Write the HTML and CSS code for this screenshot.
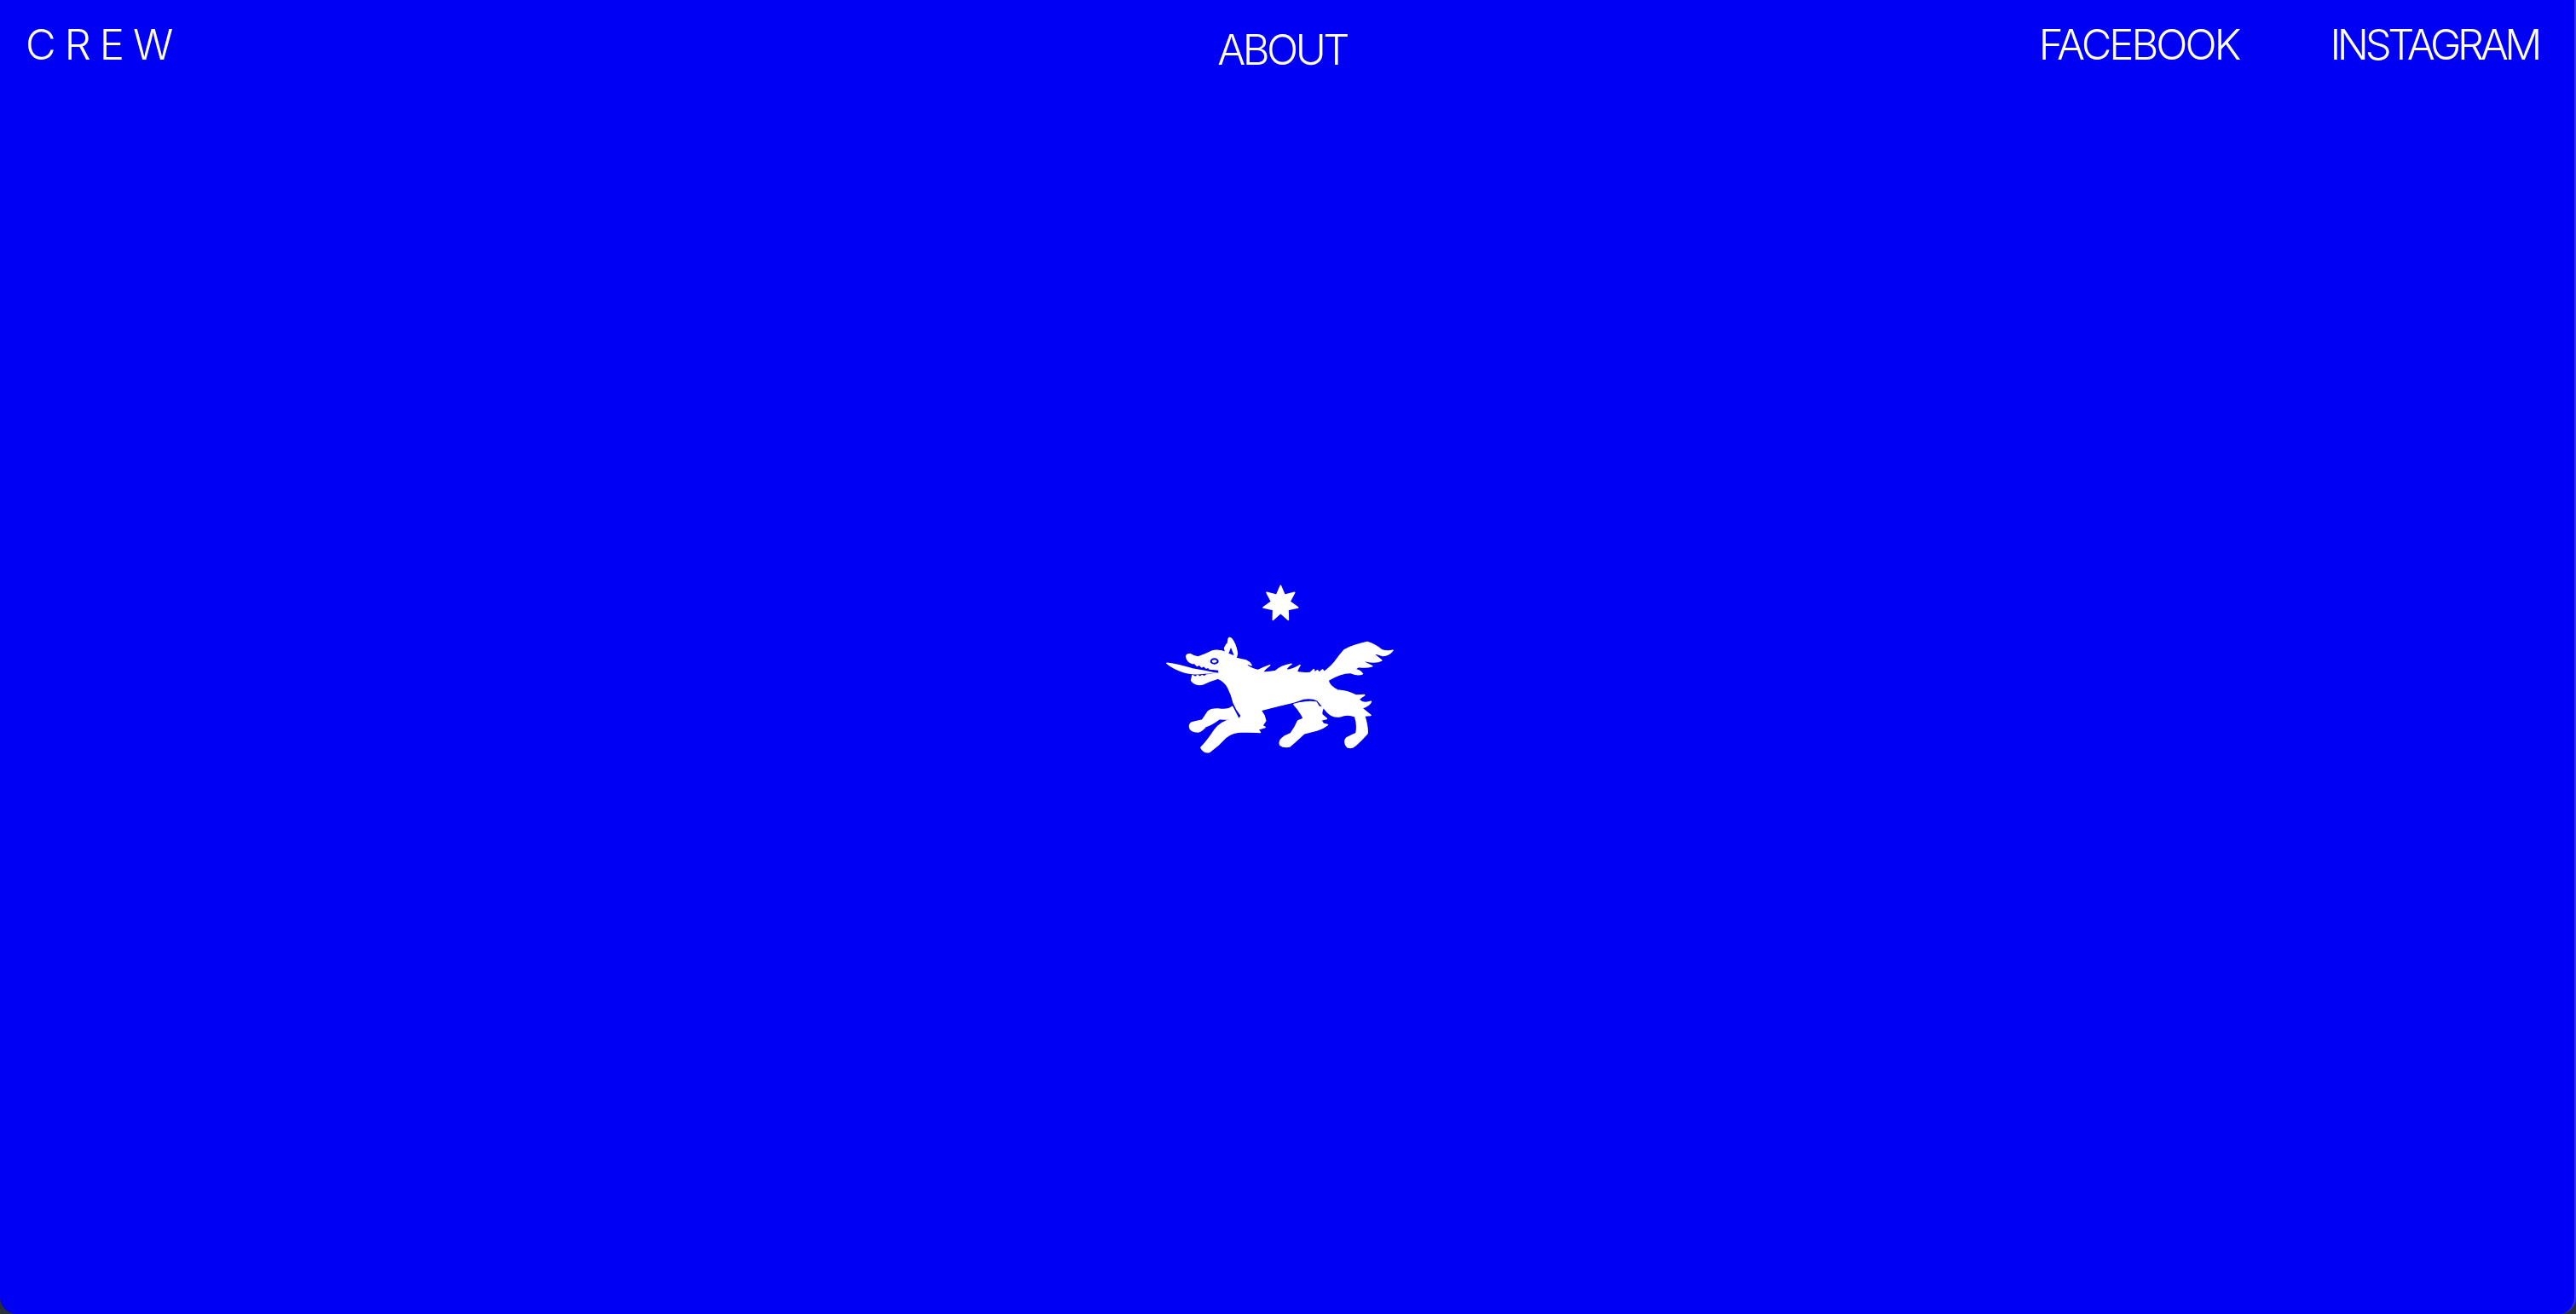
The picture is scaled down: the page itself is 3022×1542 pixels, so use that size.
FILE: index.html
```html
<!DOCTYPE html>
<html lang="en">
<head>
<meta charset="utf-8">
<title>CREW</title>
<link rel="stylesheet" href="styles.css">
</head>
<body>
<div class="page">
  <header class="topbar">
    <a class="brand" href="#">CREW</a>
    <a class="link about" href="#">ABOUT</a>
    <nav class="social">
      <a class="link" href="#">FACEBOOK</a>
      <a class="link insta" href="#">INSTAGRAM</a>
    </nav>
  </header>
  <main class="stage">
    <svg class="emblem" viewBox="0 0 1026 690" width="342" height="230" aria-label="Wolf and star">
      <polygon class="ink" points="490,52 504,85 539,76 522,108 551,129 516,136 517,172 490,148 463,172 464,136 429,129 458,108 441,76 476,85"/>
      <path class="ink" d="M158,300 Q162,292 172,293 Q185,302 200,303 Q225,295 250,282 Q270,276 297,287 L293,272 L300,258 L303,262 L307,238 Q310,232 318,240 Q332,258 337,290 Q336,300 332,307 Q350,312 368,315 Q380,320 387,332 Q375,326 365,328 Q385,345 410,350 Q430,340 452,332 Q438,342 425,357 Q450,358 472,353 Q490,335 528,328 Q512,338 508,350 Q535,348 558,332 Q550,345 546,356 Q575,362 595,358 L607,347 L609,358 L620,350 L625,358 L638,348 L642,356 Q660,345 680,322 Q700,295 715,278 Q745,262 795,251 Q820,258 845,278 Q865,285 885,280 Q870,298 850,298 Q830,292 812,287 Q825,300 845,315 Q825,325 790,317 L773,315 Q790,325 812,335 Q790,342 765,337 L750,347 Q770,350 778,362 Q760,370 735,358 Q700,358 657,385 Q660,405 690,420 Q725,422 755,438 L785,437 Q772,445 765,452 Q780,470 808,460 Q802,475 775,483 Q790,495 807,508 L785,510 Q797,550 795,572 Q775,595 752,615 Q742,626 725,620 Q710,602 722,588 Q745,576 756,572 Q762,540 752,512 Q725,502 700,512 Q675,517 655,497 L620,455 Q600,445 570,450 L535,462 Q480,475 420,490 L432,510 L437,527 L425,545 L435,550 L415,556 L400,545 L418,568 Q395,567 358,566 Q322,566 298,585 Q272,614 240,637 Q220,642 210,622 Q234,597 258,560 Q280,530 320,522 L345,520 L352,510 Q335,490 325,465 Q318,435 305,410 Q295,390 270,378 Q240,387 215,399 Q188,404 176,385 L180,368 L190,374 L198,368 L206,373 L214,368 L222,372 L230,366 L262,364 L264,360 Q235,358 200,362 Q170,362 148,355 Q115,345 90,325 Q130,330 180,345 Q225,352 265,362 L274,360 L272,348 L240,345 L236,339 L228,342 L220,334 L212,338 L204,330 L196,334 L188,325 L178,325 Q160,318 158,300 Z"/>
      <path class="ink" d="M340,517 L320,478 Q305,492 270,486 Q245,485 235,495 L215,525 L185,532 Q168,535 170,550 Q172,565 200,567 Q215,562 225,548 Q250,540 275,520 Q310,525 340,517 Z"/>
      <path class="ink" d="M537,470 Q580,457 615,462 L625,478 L640,480 Q632,500 636,507 L652,520 L632,525 L640,538 L655,542 Q640,554 620,560 Q590,568 573,572 Q548,595 522,618 Q500,622 488,612 Q483,596 503,583 L526,572 Q541,552 551,528 L571,520 Q560,495 537,470 Z"/>
      <ellipse class="cut" cx="257" cy="318" rx="15" ry="11"/>
      <ellipse class="ink" cx="257" cy="318" rx="6" ry="3"/>
      <polygon class="cut" points="315,270 326,297 307,290"/>
    </svg>
  </main>
</div>
</body>
</html>
```
FILE: styles.css
```css
html, body {
  margin: 0;
  height: 100%;
  background: #2a2f3a;
}
.page {
  box-sizing: border-box;
  height: 1542px;
  display: flex;
  flex-direction: column;
  background: #0000f5;
  border-right: 2px solid #3030fa;
  border-radius: 0 0 20px 20px;
  font-family: Inter, "Liberation Sans", sans-serif;
  font-weight: 350;
  color: #fff;
  overflow: hidden;
}
.topbar {
  height: 80px;
  display: grid;
  grid-template-columns: 1fr auto 1fr;
  padding: 0 42px 0 30px;
  align-items: start;
}
.brand, .link {
  color: #fff;
  text-decoration: none;
  font-size: 49px;
  line-height: 58px;
  letter-spacing: -3px;
  white-space: nowrap;
}
.brand {
  letter-spacing: 10px;
  padding-top: 24px;
}
.about {
  padding-top: 30px;
  letter-spacing: -3.5px;
}
.insta {
  letter-spacing: -4.4px;
}
.social {
  justify-self: end;
  display: flex;
  gap: 107px;
  padding-top: 24px;
}
.stage {
  flex: 1;
  padding-bottom: 52px;
  display: flex;
  align-items: center;
  justify-content: center;
}
.emblem {
  display: block;
}
.ink {
  fill: #fff;
  stroke: #fff;
  stroke-width: 5;
  stroke-linejoin: round;
}
.cut {
  fill: #0000f5;
}
```
